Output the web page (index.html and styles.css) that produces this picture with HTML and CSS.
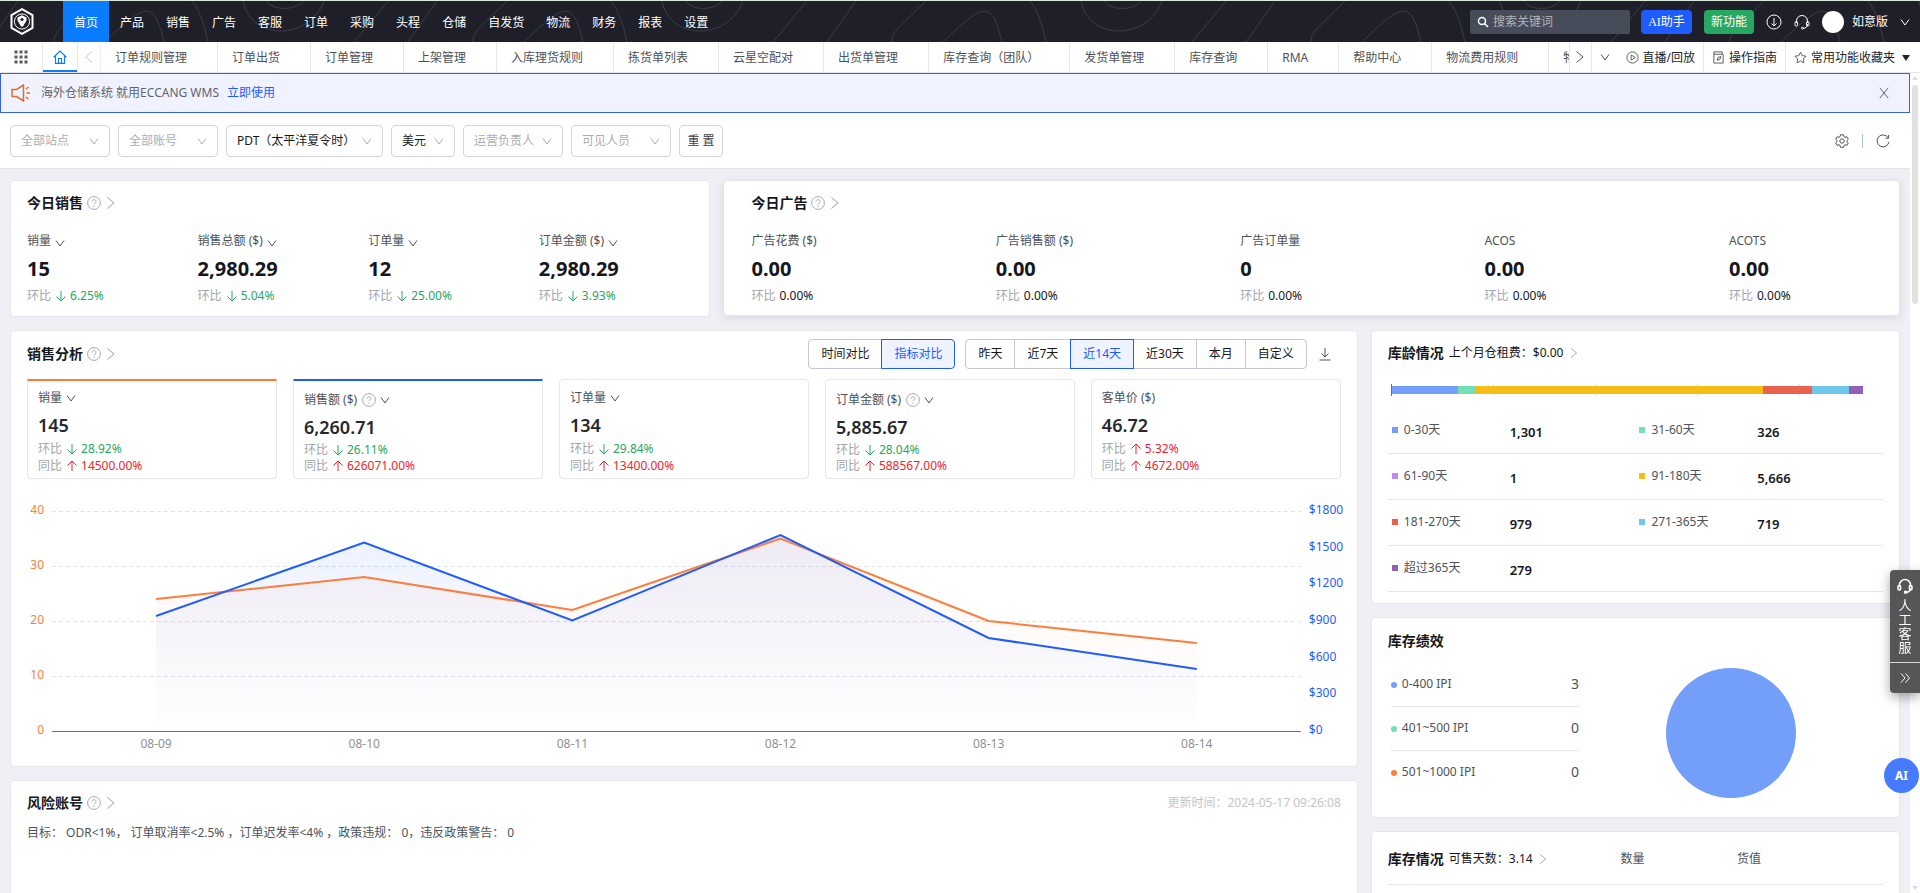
FILE: index.html
```html
<!DOCTYPE html>
<html lang="zh-CN">
<head>
<meta charset="utf-8">
<title>首页</title>
<link rel="stylesheet" href="styles.css">
</head>
<body>
<svg class="sprite" aria-hidden="true">
  <symbol id="down" viewBox="0 0 10 10"><path d="M1 2.5 5 8 9 2.5"/></symbol>
  <symbol id="right" viewBox="0 0 10 14"><path d="M1.5 1.5 8 7 1.5 12.5"/></symbol>
  <symbol id="left" viewBox="0 0 10 14"><path d="M8 1.5 2 7 8 12.5"/></symbol>
  <symbol id="help" viewBox="0 0 14 14"><circle cx="7" cy="7" r="6.4"/><path d="M5 5.6C5 3 9 3 9 5.5 9 7 7 6.9 7 8.6M7 9.8v1.1"/></symbol>
  <symbol id="arrow-down" viewBox="0 0 12 12"><path d="M6 1v10M1.5 6.5 6 11l4.500-4.500"/></symbol>
  <symbol id="arrow-up" viewBox="0 0 12 12"><path d="M6 11V1M1.500 5.500 6 1l4.500 4.500"/></symbol>
  <symbol id="headset" viewBox="0 0 16 16"><path d="M2.500 9V7a5.500 5.500 0 0 1 11 0v2M13.500 10c0 3-1.500 4.200-4.500 4.300"/><rect x="1" y="7.500" width="2.600" height="4.500" rx="1.200"/><rect x="12.400" y="7.500" width="2.600" height="4.500" rx="1.200"/><circle cx="8.500" cy="14.200" r="1"/></symbol>
</svg>

<header class="header">
  <svg class="header-lines" aria-hidden="true">
    <defs>
      <pattern id="waves" x="241" y="0" width="419" height="41" patternUnits="userSpaceOnUse">
        <path d="M26 0C32 10 54 10 62 0M2 0C10 40 68 40 83 0M113 41 147 0M167 41 196 0M232 41C232 30 240 26 266 0M283 41C325 0 332 0 342 41M370 0Q380 12 386 41"/>
      </pattern>
    </defs>
    <rect width="100%" height="100%" fill="url(#waves)"/>
  </svg>
  <a class="logo" href="#" aria-label="首页">
    <svg viewBox="0 0 24 27"><path class="hex" d="M12 1.200 22.500 7.200v12.600L12 25.800 1.500 19.800V7.200z"/><circle cx="12" cy="13.500" r="7.600"/><path class="solid" d="M7.500 9.500 12 7.200l4.500 2.300v3L13 18.500h-2L7.500 12.500z"/><circle class="dot" cx="12" cy="11.500" r="1.600"/></svg>
  </a>
  <nav class="nav">
    <a class="active" href="#">首页</a><a href="#">产品</a><a href="#">销售</a><a href="#">广告</a><a href="#">客服</a><a href="#">订单</a><a href="#">采购</a><a href="#">头程</a><a href="#">仓储</a><a href="#">自发货</a><a href="#">物流</a><a href="#">财务</a><a href="#">报表</a><a href="#">设置</a>
  </nav>
  <div class="tools">
    <label class="search">
      <svg viewBox="0 0 12 12"><circle cx="5" cy="5" r="3.500"/><path d="M7.600 7.600 11 11"/></svg>
      <input type="text" placeholder="搜索关键词" aria-label="搜索关键词">
    </label>
    <button class="pill pill-ai" type="button">AI助手</button>
    <button class="pill pill-new" type="button">新功能</button>
    <button class="tool" type="button" aria-label="下载"><svg viewBox="0 0 16 16"><circle cx="8" cy="8" r="7"/><path d="M8 4v8M5.500 9.500 8 12l2.500-2.500"/></svg></button>
    <button class="tool" type="button" aria-label="客服"><svg><use href="#headset"/></svg></button>
    <span class="avatar"></span>
    <button class="account" type="button">如意版<svg class="chev"><use href="#down"/></svg></button>
  </div>
</header>

<div class="tabbar">
  <button class="apps" type="button" aria-label="应用"><svg viewBox="0 0 14 14"><path d="M0 0h4v4H0zM5 0h4v4H5zM10 0h4v4h-4zM0 5h4v4H0zM5 5h4v4H5zM10 5h4v4h-4zM0 10h4v4H0zM5 10h4v4H5zM10 10h4v4h-4z"/></svg></button>
  <button class="home" type="button" aria-label="首页"><svg viewBox="0 0 14 14"><path d="M.7 7.200 7 1l6.300 6.200M2.500 6v7.300h9V6M5.500 13V8.500h3V13"/></svg></button>
  <button class="prev" type="button" aria-label="向左"><svg class="arrow"><use href="#left"/></svg></button>
  <nav class="tabs">
    <a href="#">订单规则管理</a><a href="#">订单出货</a><a href="#">订单管理</a><a href="#">上架管理</a><a href="#">入库理货规则</a><a href="#">拣货单列表</a><a href="#">云星空配对</a><a href="#">出货单管理</a><a href="#">库存查询（团队）</a><a href="#">发货单管理</a><a href="#">库存查询</a><a href="#">RMA</a><a href="#">帮助中心</a><a href="#">物流费用规则</a><a href="#">物流</a>
  </nav>
  <button class="next" type="button" aria-label="向右"><svg class="arrow"><use href="#right"/></svg></button>
  <button class="more" type="button" aria-label="更多"><svg class="chev"><use href="#down"/></svg></button>
  <a class="quick" href="#"><svg viewBox="0 0 14 14"><circle cx="7" cy="7" r="6"/><path d="M5.500 4.200v5.600L10 7z"/></svg>直播/回放</a>
  <a class="quick" href="#"><svg viewBox="0 0 14 14"><path d="M2 3.500h10v9.500H2zM2 3.500V1h9v2.500M5.500 10l1-3 3-1-1 3z"/></svg>操作指南</a>
  <button class="quick" type="button"><svg viewBox="0 0 14 14"><path d="m7 1.200 1.800 3.800 4.200.6-3 3 .7 4.200L7 10.800l-3.700 2 .7-4.200-3-3L5.200 5z"/></svg>常用功能收藏夹<i class="caret"></i></button>
</div>

<div class="body">
<main class="main">
  <section class="banner">
    <svg class="horn" viewBox="0 0 20 18"><path d="M1 5.500h4.500L12.500 1v16L5.500 12.500H1zM15.500 9H19M15 5l2.500-2M15 13l2.500 2"/></svg>
    <span>海外仓储系统 就用ECCANG WMS</span>
    <a href="#">立即使用</a>
    <button class="close" type="button" aria-label="关闭"><svg viewBox="0 0 10 12"><path d="M.8.8l8.400 10.400M9.200.8.8 11.200"/></svg></button>
  </section>

  <section class="filters">
    <label class="pick"><select aria-label="站点"><option>全部站点</option></select><svg class="chev"><use href="#down"/></svg></label>
    <label class="pick"><select aria-label="账号"><option>全部账号</option></select><svg class="chev"><use href="#down"/></svg></label>
    <label class="pick set wide"><select aria-label="时区"><option>PDT（太平洋夏令时）</option></select><svg class="chev"><use href="#down"/></svg></label>
    <label class="pick set slim"><select aria-label="币种"><option>美元</option></select><svg class="chev"><use href="#down"/></svg></label>
    <label class="pick"><select aria-label="运营负责人"><option>运营负责人</option></select><svg class="chev"><use href="#down"/></svg></label>
    <label class="pick"><select aria-label="可见人员"><option>可见人员</option></select><svg class="chev"><use href="#down"/></svg></label>
    <button class="reset" type="button">重 置</button>
    <div class="filter-tools">
      <button type="button" aria-label="设置"><svg viewBox="0 0 14 14"><circle cx="7" cy="7" r="2.200"/><path d="M5.500.8h3l.5 1.900 1 .6 1.900-.5 1.400 2.500L11.900 6.600v1l1.400 1.300-1.400 2.400-1.900-.5-1 .6-.5 1.900h-3L5 11.400l-1-.6-1.900.5L.7 8.900l1.400-1.300v-1L.7 5.300l1.400-2.500 1.900.5 1-.6z"/></svg></button>
      <i class="bar"></i>
      <button type="button" aria-label="刷新"><svg viewBox="0 0 14 14"><path d="M12.200 3.800A6 6 0 1 0 13 7.800M12.600 1v3.200H9.500"/></svg></button>
    </div>
  </section>

  <div class="content">
    <div class="row top">
      <section class="card sales">
        <h2 class="title">今日销售<svg class="help"><use href="#help"/></svg><svg class="arrow"><use href="#right"/></svg></h2>
        <div class="stats four">
          <div class="stat"><p class="label">销量<svg class="chev"><use href="#down"/></svg></p><p class="value">15</p><p class="rate">环比 <span class="fall"><svg><use href="#arrow-down"/></svg>6.25%</span></p></div>
          <div class="stat"><p class="label">销售总额 ($)<svg class="chev"><use href="#down"/></svg></p><p class="value">2,980.29</p><p class="rate">环比 <span class="fall"><svg><use href="#arrow-down"/></svg>5.04%</span></p></div>
          <div class="stat"><p class="label">订单量<svg class="chev"><use href="#down"/></svg></p><p class="value">12</p><p class="rate">环比 <span class="fall"><svg><use href="#arrow-down"/></svg>25.00%</span></p></div>
          <div class="stat"><p class="label">订单金额 ($)<svg class="chev"><use href="#down"/></svg></p><p class="value">2,980.29</p><p class="rate">环比 <span class="fall"><svg><use href="#arrow-down"/></svg>3.93%</span></p></div>
        </div>
      </section>
      <section class="card ads">
        <h2 class="title">今日广告<svg class="help"><use href="#help"/></svg><svg class="arrow"><use href="#right"/></svg></h2>
        <div class="stats five">
          <div class="stat"><p class="label">广告花费 ($)</p><p class="value">0.00</p><p class="rate">环比 <b>0.00%</b></p></div>
          <div class="stat"><p class="label">广告销售额 ($)</p><p class="value">0.00</p><p class="rate">环比 <b>0.00%</b></p></div>
          <div class="stat"><p class="label">广告订单量</p><p class="value">0</p><p class="rate">环比 <b>0.00%</b></p></div>
          <div class="stat"><p class="label">ACOS</p><p class="value">0.00</p><p class="rate">环比 <b>0.00%</b></p></div>
          <div class="stat"><p class="label">ACOTS</p><p class="value">0.00</p><p class="rate">环比 <b>0.00%</b></p></div>
        </div>
      </section>
    </div>

    <div class="row bottom">
      <div class="col">
        <section class="card analysis">
          <div class="head">
            <h2 class="title">销售分析<svg class="help"><use href="#help"/></svg><svg class="arrow"><use href="#right"/></svg></h2>
            <div class="seg"><button type="button">时间对比</button><button class="on" type="button">指标对比</button></div>
            <div class="seg"><button type="button">昨天</button><button type="button">近7天</button><button class="on" type="button">近14天</button><button type="button">近30天</button><button type="button">本月</button><button type="button">自定义</button></div>
            <button class="export" type="button" aria-label="导出"><svg viewBox="0 0 12 14"><path d="M6 1v9M2.500 6.500 6 10l3.500-3.500M.5 13h11"/></svg></button>
          </div>
          <div class="metrics">
            <div class="metric orange"><p class="label">销量<svg class="chev"><use href="#down"/></svg></p><p class="value">145</p><p class="rate">环比 <span class="fall"><svg><use href="#arrow-down"/></svg>28.92%</span></p><p class="rate">同比 <span class="rise"><svg><use href="#arrow-up"/></svg>14500.00%</span></p></div>
            <div class="metric blue"><p class="label tall">销售额 ($)<svg class="help"><use href="#help"/></svg><svg class="chev"><use href="#down"/></svg></p><p class="value">6,260.71</p><p class="rate">环比 <span class="fall"><svg><use href="#arrow-down"/></svg>26.11%</span></p><p class="rate">同比 <span class="rise"><svg><use href="#arrow-up"/></svg>626071.00%</span></p></div>
            <div class="metric"><p class="label">订单量<svg class="chev"><use href="#down"/></svg></p><p class="value">134</p><p class="rate">环比 <span class="fall"><svg><use href="#arrow-down"/></svg>29.84%</span></p><p class="rate">同比 <span class="rise"><svg><use href="#arrow-up"/></svg>13400.00%</span></p></div>
            <div class="metric"><p class="label tall">订单金额 ($)<svg class="help"><use href="#help"/></svg><svg class="chev"><use href="#down"/></svg></p><p class="value">5,885.67</p><p class="rate">环比 <span class="fall"><svg><use href="#arrow-down"/></svg>28.04%</span></p><p class="rate">同比 <span class="rise"><svg><use href="#arrow-up"/></svg>588567.00%</span></p></div>
            <div class="metric"><p class="label">客单价 ($)</p><p class="value">46.72</p><p class="rate">环比 <span class="rise"><svg><use href="#arrow-up"/></svg>5.32%</span></p><p class="rate">同比 <span class="rise"><svg><use href="#arrow-up"/></svg>4672.00%</span></p></div>
          </div>
          <div class="chart">
            <div class="axis left"><span>40</span><span>30</span><span>20</span><span>10</span><span>0</span></div>
            <svg class="plot" viewBox="0 0 1248 220" preserveAspectRatio="none" role="img" aria-label="销量与销售额趋势">
              <defs>
                <linearGradient id="fo" x1="0" y1="0" x2="0" y2="1"><stop offset="0" stop-color="#ff7d3c" stop-opacity=".06"/><stop offset="1" stop-color="#ff7d3c" stop-opacity="0"/></linearGradient>
                <linearGradient id="fb" x1="0" y1="0" x2="0" y2="1"><stop offset="0" stop-color="#1f5cff" stop-opacity=".08"/><stop offset="1" stop-color="#1f5cff" stop-opacity="0"/></linearGradient>
              </defs>
              <path class="grid" d="M0 .5H1248M0 55.500H1248M0 110.500H1248M0 165.500H1248"/>
              <path class="base" d="M0 220.500H1248"/>
              <path fill="url(#fo)" d="M104 88 312 66 520 99 728 27.500 936 110 1144 132V220H104z"/>
              <path fill="url(#fb)" d="M104 105 312 31.500 520 109.500 728 24 936 127 1144 158V220H104z"/>
              <path class="line-o" d="M104 88 312 66 520 99 728 27.500 936 110 1144 132"/>
              <path class="line-b" d="M104 105 312 31.500 520 109.500 728 24 936 127 1144 158"/>
            </svg>
            <div class="axis right"><span>$1800</span><span>$1500</span><span>$1200</span><span>$900</span><span>$600</span><span>$300</span><span>$0</span></div>
            <div class="dates"><span>08-09</span><span>08-10</span><span>08-11</span><span>08-12</span><span>08-13</span><span>08-14</span></div>
          </div>
        </section>
        <section class="card risk">
          <div class="head">
            <h2 class="title">风险账号<svg class="help"><use href="#help"/></svg><svg class="arrow"><use href="#right"/></svg></h2>
            <span class="time">更新时间：2024-05-17 09:26:08</span>
          </div>
          <p class="goal">目标： ODR&lt;1%， 订单取消率&lt;2.5% ，订单迟发率&lt;4% ，政策违规： 0，违反政策警告： 0</p>
        </section>
      </div>

      <div class="col side">
        <section class="card aging">
          <h2 class="title">库龄情况<a class="sub" href="#">上个月仓租费：$0.00<svg class="arrow"><use href="#right"/></svg></a></h2>
          <div class="stack">
            <i class="c1" style="flex-grow:1301"></i><i class="c2" style="flex-grow:326"></i><i class="c3" style="flex-grow:1"></i><i class="c4" style="flex-grow:5666"></i><i class="c5" style="flex-grow:979"></i><i class="c6" style="flex-grow:719"></i><i class="c7" style="flex-grow:279"></i>
          </div>
          <table class="ages">
            <tr><td><i class="sq c1"></i>0-30天</td><td class="num">1,301</td><td><i class="sq c2"></i>31-60天</td><td class="num">326</td></tr>
            <tr><td><i class="sq c3"></i>61-90天</td><td class="num">1</td><td><i class="sq c4"></i>91-180天</td><td class="num">5,666</td></tr>
            <tr><td><i class="sq c5"></i>181-270天</td><td class="num">979</td><td><i class="sq c6"></i>271-365天</td><td class="num">719</td></tr>
            <tr><td><i class="sq c7"></i>超过365天</td><td class="num">279</td><td></td><td></td></tr>
          </table>
        </section>
        <section class="card perf">
          <h2 class="title">库存绩效</h2>
          <div class="perf-body">
            <table class="ipi">
              <tr><td><i class="dot c1"></i>0-400 IPI</td><td class="n">3</td></tr>
              <tr><td><i class="dot c2"></i>401~500 IPI</td><td class="n">0</td></tr>
              <tr><td><i class="dot c8"></i>501~1000 IPI</td><td class="n">0</td></tr>
            </table>
            <svg class="pie" viewBox="0 0 130 130" role="img" aria-label="0-400 IPI：3"><circle cx="65" cy="65" r="65"/></svg>
          </div>
        </section>
        <section class="card stock">
          <table class="stocks">
            <tr><th><span class="title">库存情况<a class="sub" href="#">可售天数：3.14<svg class="arrow"><use href="#right"/></svg></a></span></th><th>数量</th><th>货值</th></tr>
          </table>
        </section>
      </div>
    </div>
  </div>
</main>
<div class="scroll" aria-hidden="true"><i class="up"></i><i class="thumb"></i><i class="dn"></i></div>
</div>

<aside class="service">
  <button class="talk" type="button"><svg><use href="#headset"/></svg><span>人工客服</span></button>
  <button class="fold" type="button" aria-label="收起"><svg viewBox="0 0 10 10"><path d="M1 .5 5 5 1 9.500M5.500.5 9.500 5l-4 4.500"/></svg></button>
</aside>
<button class="ai" type="button">AI</button>
</body>
</html>
```
FILE: styles.css
```css
* { box-sizing: border-box; }
body {
  margin: 0;
  height: 100vh;
  display: flex;
  flex-direction: column;
  overflow: hidden;
  background: #eff0f5;
  color: #4e5259;
  font: 12px/16px "Noto Sans", "Noto Sans CJK SC", sans-serif;
}
button, input, select { font: inherit; color: inherit; }
button { border: 0; padding: 0; background: none; cursor: pointer; }
a { color: inherit; text-decoration: none; }
p, h2 { margin: 0; }
svg { fill: none; stroke: currentColor; flex: none; }
i { display: block; }
table { border-collapse: collapse; }
.sprite { position: absolute; width: 0; height: 0; }
.chev { width: 10px; height: 10px; }
.arrow { width: 10px; height: 14px; }
.help { width: 14px; height: 14px; color: #a6a9b0; }

/* header */
.header {
  position: relative;
  flex: none;
  height: 42px;
  display: flex;
  align-items: center;
  border-top: 1px solid #dce9dd;
  background: #1e1f28;
  color: #fff;
}
.header-lines { position: absolute; inset: 0; width: 100%; height: 100%; stroke: none; }
.header-lines path { stroke: #393b44; stroke-width: 1; }
.logo { position: relative; width: 63px; padding-left: 10px; }
.logo svg { display: block; width: 24px; height: 27px; }
.logo .hex { stroke-width: 2; }
.logo .solid { fill: #fff; stroke: none; }
.logo .dot { fill: #1e1f28; stroke: none; }
.nav { position: relative; display: flex; height: 100%; }
.nav a { display: flex; align-items: center; padding: 3px 11px 0; }
.nav .active { background: #0a7cff; }
.tools { position: relative; display: flex; align-items: center; height: 100%; margin-left: auto; padding-right: 10px; }
.search { display: flex; align-items: center; width: 160px; height: 24px; padding: 0 7px; border-radius: 2px; background: #464c5a; }
.search svg { width: 12px; height: 12px; stroke-width: 1.500; }
.search input { width: 100%; min-width: 0; margin-left: 4px; padding: 0; border: 0; outline: 0; background: none; }
.search input::placeholder { color: #b3b4b8; opacity: 1; }
.pill { height: 24px; border-radius: 4px; color: #fff; }
.pill-ai { width: 51px; margin-left: 11px; background: #1f5cff; font-family: "Liberation Serif", "Noto Sans CJK SC", serif; }
.pill-new { width: 50px; margin-left: 12px; background: #27a862; }
.tool { display: flex; margin-left: 12px; }
.tool svg { width: 16px; height: 16px; }
.avatar { width: 22px; height: 22px; margin-left: 12px; border-radius: 50%; background: #fff; }
.account { display: flex; align-items: center; gap: 12px; margin-left: 8px; color: #fff; }

/* tab bar */
.tabbar { flex: none; display: flex; align-items: stretch; height: 31px; border-bottom: 1px solid #e2e3e6; background: #fff; }
.tabbar button { display: flex; align-items: center; justify-content: center; }
.apps { width: 42px; }
.apps svg { width: 14px; height: 14px; fill: #595959; stroke: #fff; stroke-width: 1; }
.home { width: 36px; border-left: 1px solid #e8e8e8; border-right: 1px solid #e8e8e8; box-shadow: inset 0 -2px #0a7cff; color: #0a7cff; }
.home svg { width: 14px; height: 14px; stroke-width: 1.200; }
.prev { width: 23px; border-right: 1px solid #f0f0f0; color: #c8c8c8; }
.tabs { flex: 1; min-width: 0; display: flex; overflow: hidden; }
.tabs a { flex: none; display: flex; align-items: center; padding: 1px 30px 0 14px; border-right: 1px solid #e8e8e8; }
.next { width: 23px; border-left: 1px solid #e8e8e8; border-right: 1px solid #e8e8e8; }
.more { width: 26px; }
.quick { display: flex; align-items: center; gap: 4px; padding: 1px 8px 0; color: #23252b; border-right: 1px solid #e8e8e8; }
.quick:last-child { border-right: 0; }
.quick svg { width: 13px; height: 13px; color: #555; }
.caret { margin: 0 2px 0 3px; border: 4px solid transparent; border-top: 6px solid #23252b; border-bottom: 0; }

/* scrolling body */
.body { flex: 1; min-height: 0; display: flex; }
.main { flex: 1; min-width: 0; overflow: hidden; }
.scroll { display: flex; flex-direction: column; align-items: center; width: 10px; background: #fff; }
.scroll .thumb { width: 6px; height: 219px; margin-top: 5px; border-radius: 3px; background: #e1e1e3; }
.scroll .up, .scroll .dn { border: 3px solid transparent; }
.scroll .up { margin-top: 3px; border-top: 0; border-bottom: 4px solid #dcdcde; }
.scroll .dn { margin: auto 0 3px; border-bottom: 0; border-top: 4px solid #dcdcde; }

.banner { display: flex; align-items: center; height: 40px; padding: 0 20px 0 10px; border: 1px solid #3560e8; background: #f0f3ff; color: #62656c; }
.horn { width: 20px; height: 18px; margin-right: 10px; color: #dd6b33; stroke-width: 1.500; }
.banner a { margin-left: 8px; color: #1f5cff; }
.close { display: flex; margin-left: auto; }
.close svg { width: 10px; height: 12px; }

.filters { display: flex; align-items: center; gap: 8px; height: 56px; padding: 1px 20px 0 10px; border-bottom: 1px solid #e4e5e8; background: #fff; }
.pick { position: relative; width: 100px; height: 32px; color: #aaadb3; }
.pick.wide { width: 157px; }
.pick.slim { width: 64px; }
.pick select { width: 100%; height: 100%; padding: 0 10px; border: 1px solid #d3d5db; border-radius: 4px; background: #fff; appearance: none; }
.pick.set select { color: #15171c; }
.pick .chev { position: absolute; right: 11px; top: 11px; pointer-events: none; }
.reset { width: 44px; height: 32px; border: 1px solid #d3d5db; border-radius: 4px; background: #fff; color: #3c3f46; }
.filter-tools { display: flex; align-items: center; gap: 13px; margin-left: auto; }
.filter-tools button { display: flex; }
.filter-tools svg { width: 14px; height: 14px; }
.bar { width: 1px; height: 14px; background: #a9c4d8; }

/* cards */
.content { padding: 11px 10px 0; }
.row { display: flex; }
.col { flex: 1; min-width: 0; display: flex; flex-direction: column; gap: 13px; }
.card { border: 1px solid #e5e6ea; border-radius: 4px; background: #fff; padding: 0 16px; }
.title { display: flex; align-items: center; font-size: 14px; line-height: 20px; font-weight: 700; color: #15171c; }
.title .help { margin-left: 4px; }
.title .arrow { margin-left: 5px; color: #9a9da4; }
.sub { display: flex; align-items: center; margin-left: 5px; font-size: 12px; font-weight: 400; }
.sub .arrow { height: 12px; }

.top { gap: 13px; align-items: flex-start; margin-bottom: 13px; }
.top .card { height: 137px; padding-top: 12px; }
.sales { flex: 700; padding-right: 0; }
.top .ads { flex: 1177; height: 136px; padding: 12px 0 0 27px; box-shadow: 0 2px 8px rgba(0, 0, 0, .1); }
.stats { display: grid; margin-top: 19px; }
.four { grid-template-columns: repeat(4, 1fr); }
.five { grid-template-columns: repeat(4, 23fr) 16fr; }
.label { display: flex; align-items: center; height: 18px; }
.label .chev { margin-left: 4px; }
.stat .label .chev { margin-top: 4px; }
.stat .value { margin: 7px 0; font-size: 20px; line-height: 24px; font-weight: 700; color: #15171c; }
.rate { display: flex; align-items: center; gap: 4px; color: #a2a5ab; }
.rate b { font-weight: 400; color: #15171c; }
.rate span { display: flex; align-items: center; gap: 3px; }
.rate svg { width: 12px; height: 12px; }
.fall { color: #27a862; }
.rise { color: #f5222d; }

.bottom { gap: 13px; }
.side { flex: 0 0 28%; }
.head { display: flex; align-items: center; }
.head .title { margin-right: auto; }
.analysis { height: 437px; padding-top: 8px; }
.seg { display: flex; height: 30px; margin-left: 10px; }
.seg button { padding: 0 12px; border: 1px solid #c4c7ce; margin-left: -1px; color: #15171c; }
.seg button:first-child { margin-left: 0; border-radius: 4px 0 0 4px; }
.seg button:last-child { border-radius: 0 4px 4px 0; }
.seg .on { position: relative; border-color: #1f5cff; background: #eef3ff; color: #1f5cff; }
.export { display: flex; margin: 0 10px 0 12px; }
.export svg { width: 12px; height: 14px; }
.metrics { display: grid; grid-template-columns: repeat(5, 1fr); gap: 16px; margin-top: 10px; }
.metric { height: 100px; padding: 9px 10px 0; border: 1px solid #e5e6ea; border-radius: 4px; }
.metric.orange { border-top: 2px solid #ff7d3c; padding-top: 8px; border-radius: 0 0 4px 4px; }
.metric.blue { border-top: 2px solid #1f5cff; padding-top: 8px; border-radius: 0 0 4px 4px; }
.metric .tall { height: 22px; }
.metric .help { margin-left: 5px; }
.metric .value { margin: 6px 0 3px; font-size: 18px; line-height: 24px; font-weight: 600; color: #26282d; }
.metric .tall + .value { margin-top: 4px; }
.metric .rate { line-height: 17px; }
.metric .tall ~ .rate { line-height: 16px; }

.chart { display: grid; grid-template-columns: 17px 1fr 32px; column-gap: 8px; margin-top: 32px; }
.axis { display: flex; flex-direction: column; justify-content: space-between; margin: -9px 0 -7px; }
.axis.left { color: #ff7d3c; text-align: right; }
.axis.right { color: #1f5cff; }
.plot { display: block; width: 100%; height: 220px; overflow: visible; }
.plot path { stroke: none; vector-effect: non-scaling-stroke; }
.plot .grid { stroke: #dfe3f0; stroke-dasharray: 4 3; }
.plot .base { stroke: #6e7079; }
.plot .line-o { stroke: #ff7d3c; stroke-width: 2; }
.plot .line-b { stroke: #1f5cff; stroke-width: 2; }
.dates { grid-column: 2; display: flex; margin-top: 5px; color: #8e9096; text-align: center; }
.dates span { flex: 1; }

.risk { min-height: 200px; padding-top: 12px; }
.time { color: #c3c5ca; }
.goal { margin-top: 12px; }

.aging { height: 274px; padding-top: 12px; }
.stack {
  display: flex;
  height: 12px;
  margin: 21px 20px 0 3px;
  padding: 2px 0;
  border-left: 1px solid #6e7079;
  background: repeating-linear-gradient(90deg, transparent 0 101px, #e0e2e8 101px 102px);
}
.stack i { flex-basis: 0; }
.c1 { background: #739ffb; }
.c2 { background: #74dfb5; }
.c3 { background: #b88cf0; }
.c4 { background: #f6bd16; }
.c5 { background: #e8624f; }
.c6 { background: #6dc8ec; }
.c7 { background: #945fb9; }
.c8 { background: #ff7d3c; }
.ages { width: 100%; margin-top: 11px; table-layout: fixed; }
.ages td { height: 46px; padding: 0 0 0 4px; border-bottom: 1px solid #e5e6e8; width: 24.600%; }
.ages .num { padding-top: 4px; font-size: 13px; font-weight: 600; color: #15171c; width: 25.400%; padding-left: 0; }
.sq { display: inline-block; width: 6px; height: 6px; margin: 0 6px 2px 0; vertical-align: middle; }

.perf { height: 201px; padding-top: 13px; }
.perf-body { display: flex; align-items: flex-start; margin-top: 11px; }
.ipi { width: 38%; margin-left: 3px; }
.ipi td { height: 44px; padding: 0; border-bottom: 1px solid #e5e6e8; }
.ipi tr:last-child td { border-bottom: 0; }
.ipi .n { text-align: right; font-size: 14px; }
.dot { display: inline-block; width: 6px; height: 6px; margin-right: 5px; border-radius: 50%; }
.pie { width: 130px; height: 130px; margin: 6px auto 0; fill: #739ffb; stroke: none; }

.stock { min-height: 200px; }
.stocks { width: 100%; table-layout: fixed; }
.stocks th { height: 52px; padding: 3px 0 0; border-bottom: 1px solid #e5e6e8; text-align: left; font-weight: 400; }
.stocks th:first-child { width: 47%; }
.stocks th:nth-child(2) { width: 23.500%; }

/* floating controls */
.service { position: fixed; right: 0; top: 570px; width: 30px; border-radius: 4px 0 0 4px; background: rgba(75, 75, 77, .94); color: #fff; box-shadow: 0 4px 12px rgba(0, 0, 0, .35); }
.service button { display: flex; flex-direction: column; align-items: center; width: 100%; color: #fff; }
.talk { padding: 8px 0; gap: 4px; }
.talk svg { width: 16px; height: 16px; stroke-width: 1.500; }
.talk span { width: 13px; font-size: 13px; line-height: 14px; }
.service .talk { border-bottom: 1px solid #d8d8d8; }
.fold { padding: 10px 0; }
.fold svg { width: 10px; height: 10px; }
.ai { position: fixed; right: 1px; top: 758px; width: 35px; height: 35px; border-radius: 50%; background: #467bff; color: #fff; font-weight: 700; }
```
